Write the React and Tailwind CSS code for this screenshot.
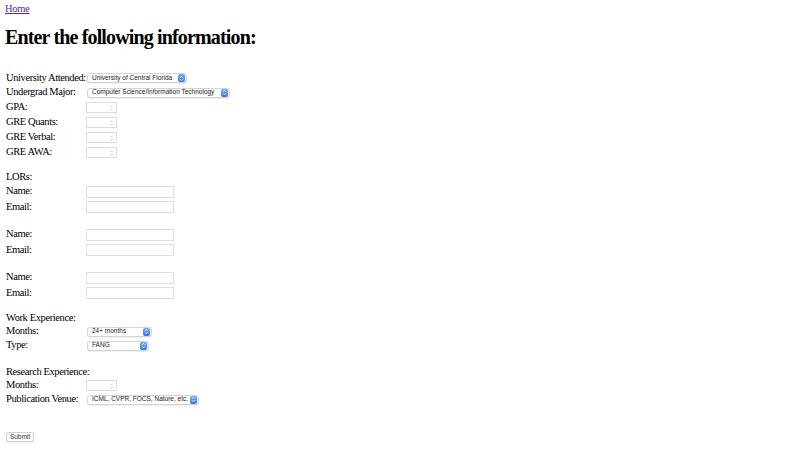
import React from "react";

const serif = { fontFamily: '"Liberation Serif", "Times New Roman", serif' };

function Arrows() {
  return (
    <svg width="5" height="7" viewBox="0 0 5 7" className="block">
      <path d="M1 2.8 L2.5 1.3 L4 2.8" fill="none" stroke="white" strokeWidth="0.9" />
      <path d="M1 4.2 L2.5 5.7 L4 4.2" fill="none" stroke="white" strokeWidth="0.9" />
    </svg>
  );
}

function Select({ w, text }) {
  return (
    <div
      className="flex h-[10px] items-center justify-between rounded-[3px] border border-[#d4d4d4] bg-white pl-[4px] pr-[1px] shadow-[0_0.5px_0.5px_rgba(0,0,0,0.12)]"
      style={{ width: w }}
    >
      <span className="whitespace-nowrap text-[6.5px] leading-none text-[#222] font-['Liberation_Sans',Arial,sans-serif]">
        {text}
      </span>
      <span className="flex h-[8px] w-[7px] shrink-0 items-center justify-center rounded-[2px] bg-gradient-to-b from-[#6eaaf7] to-[#2b77ee]">
        <Arrows />
      </span>
    </div>
  );
}

function NumberInput() {
  return (
    <div className="flex h-[11px] w-[31px] items-center justify-end border border-[#dcdcdc] bg-white pr-[3px]">
      <svg width="3" height="6" viewBox="0 0 3 6" className="block">
        <path d="M0.3 2.2 L1.5 0.8 L2.7 2.2" fill="none" stroke="#b0b0b0" strokeWidth="0.6" />
        <path d="M0.3 3.8 L1.5 5.2 L2.7 3.8" fill="none" stroke="#b0b0b0" strokeWidth="0.6" />
      </svg>
    </div>
  );
}

function TextInput() {
  return <div className="h-[12px] w-[88px] border border-[#dedede] bg-white" />;
}

function Row({ label, h, children }) {
  return (
    <div className="flex items-center" style={{ height: h }}>
      <div className="w-[80px] shrink-0 whitespace-nowrap text-[10.5px] leading-none tracking-[-0.4px] text-black">{label}</div>
      <div className="flex items-center">{children}</div>
    </div>
  );
}

export default function App() {
  return (
    <div className="min-h-[468px] w-[806px] bg-white pl-[5px] pt-[3px]" style={serif}>
      <div className="h-[12px] text-[10.5px] leading-[12px] tracking-[-0.3px]">
        <a href="#" className="text-[#5b2a9a] underline">Home</a>
      </div>
      <h1 className="mt-[11px] h-[23px] text-[20px] font-bold leading-[23px] tracking-[-0.85px] text-black">
        Enter the following information:
      </h1>
      <div className="mt-[22px] pl-[1px]">
        <Row label="University Attended:" h={14}><div className="ml-[1px]"><Select w={100} text="University of Central Florida" /></div></Row>
        <Row label="Undergrad Major:" h={15}><div className="ml-[1px]"><Select w={143} text="Computer Science/Information Technology" /></div></Row>
        <Row label="GPA:" h={15}><NumberInput /></Row>
        <Row label="GRE Quants:" h={15}><NumberInput /></Row>
        <Row label="GRE Verbal:" h={15}><NumberInput /></Row>
        <Row label="GRE AWA:" h={15}><NumberInput /></Row>
        <div className="h-[11px]" />
        <Row label="LORs:" h={13} />
        <Row label="Name:" h={15}><TextInput /></Row>
        <Row label="Email:" h={16}><TextInput /></Row>
        <div className="h-[12px]" />
        <Row label="Name:" h={15}><TextInput /></Row>
        <Row label="Email:" h={16}><TextInput /></Row>
        <div className="h-[12px]" />
        <Row label="Name:" h={15}><TextInput /></Row>
        <Row label="Email:" h={16}><TextInput /></Row>
        <div className="h-[10px]" />
        <Row label="Work Experience:" h={14} />
        <Row label="Months:" h={13}><div className="ml-[1px]"><Select w={65} text="24+ months" /></div></Row>
        <Row label="Type:" h={15}><div className="ml-[1px]"><Select w={62} text="FANG" /></div></Row>
        <div className="h-[12px]" />
        <Row label="Research Experience:" h={14} />
        <Row label="Months:" h={13}><NumberInput /></Row>
        <Row label="Publication Venue:" h={15}><div className="ml-[1px]"><Select w={112} text="ICML, CVPR, FOCS, Nature, etc." /></div></Row>
        <div className="h-[25px]" />
        <button className="flex h-[10px] w-[28px] items-center justify-center rounded-[2px] border border-[#d0d0d0] bg-white text-[6.5px] leading-none text-[#333] shadow-[0_0.5px_0.5px_rgba(0,0,0,0.1)] font-['Liberation_Sans',Arial,sans-serif]">
          Submit
        </button>
      </div>
    </div>
  );
}
